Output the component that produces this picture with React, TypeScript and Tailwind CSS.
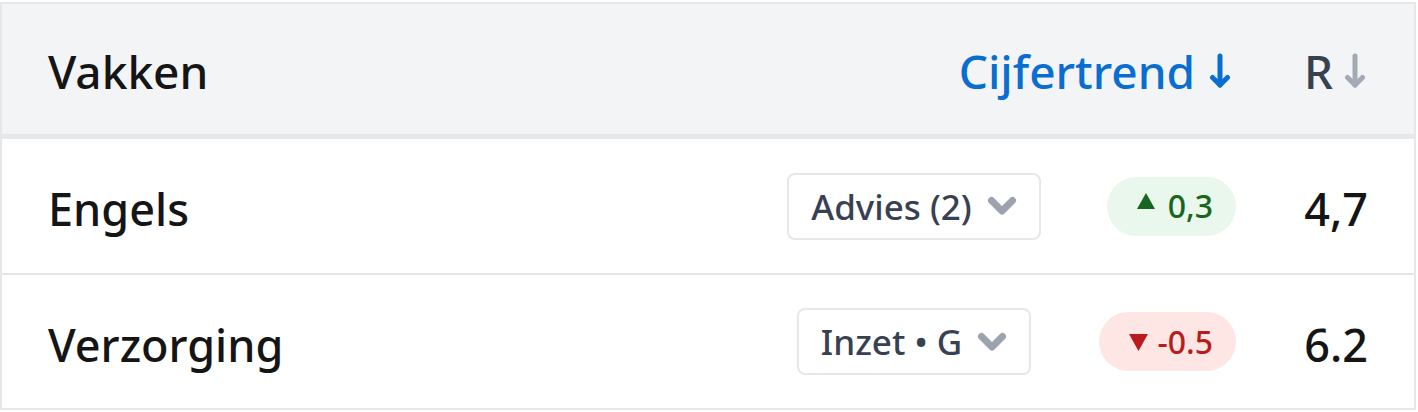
import React from "react";

const Chevron = () => (
  <svg width="30" height="20" viewBox="0 0 30 20" className="shrink-0">
    <path d="M4.5 4.5 L15 15 L25.5 4.5" fill="none" stroke="#9ca3af" strokeWidth="7" strokeLinecap="round" strokeLinejoin="round" />
  </svg>
);

const Arrow = ({ color }: { color: string }) => (
  <svg width="22" height="36" viewBox="0 0 22 36" className="shrink-0">
    <path d="M11 3 V32" fill="none" stroke={color} strokeWidth="5" strokeLinecap="round" />
    <path d="M3.5 24.5 L11 32 L18.5 24.5" fill="none" stroke={color} strokeWidth="5" strokeLinecap="round" strokeLinejoin="round" />
  </svg>
);

const Dropdown = ({ label }: { label: string }) => (
  <div className="flex h-[67px] items-center gap-[15px] rounded-[8px] border-2 border-[#e5e7eb] bg-white px-[22px] text-[35px] text-[#374151]">
    <span className="whitespace-nowrap leading-none">{label}</span>
    <Chevron />
  </div>
);

const Pill = ({ up, value }: { up: boolean; value: string }) => (
  <div
    className={
      up
        ? "flex h-[59px] items-center gap-[13px] rounded-full bg-[#e9f7ec] pl-[30px] pr-[23px] text-[32px] text-[#17651f]"
        : "flex h-[59px] items-center gap-[9px] rounded-full bg-[#fde6e3] pl-[30px] pr-[23px] text-[32px] text-[#b91c1c]"
    }
  >
    {up ? (
      <svg width="18" height="16" viewBox="0 0 18 16" className="mb-[10px]">
        <path d="M9 0 L18 16 H0 Z" fill="currentColor" />
      </svg>
    ) : (
      <svg width="19" height="17" viewBox="0 0 19 17" className="mt-[2px]">
        <path d="M0 0 H19 L9.5 17 Z" fill="currentColor" />
      </svg>
    )}
    <span className="leading-none">{value}</span>
  </div>
);

const rows = [
  { name: "Engels", dd: "Advies (2)", up: true, trend: "0,3", r: "4,7", h: "h-[136px]" },
  { name: "Verzorging", dd: "Inzet • G", up: false, trend: "-0.5", r: "6.2", h: "h-[135px]" },
];

export default function App() {
  return (
    <div className="h-[412px] w-[1418px] bg-white pt-[2px]" style={{ fontFamily: "'Noto Sans', 'Open Sans', sans-serif" }}>
      <div className="w-[1416px] border-x-2 border-t-2 border-[#e5e7eb]">
        <div className="grid h-[135px] grid-cols-[1fr_300px_172px_132px] items-center border-b-[5px] border-[#e5e7eb] bg-[#f3f4f6] pl-[46px] pr-[46px] pt-[4px] text-[46px] font-medium">
          <div className="text-[#151515]">Vakken</div>
          <div className="col-span-2 flex items-center justify-end gap-[14px] pr-[5px] text-[#0a6ed1]">
            <span>Cijfertrend</span>
            <Arrow color="#0a6ed1" />
          </div>
          <div className="flex items-center justify-end gap-[11px] pr-[2px] text-[#374151]">
            <span>R</span>
            <Arrow color="#a3aab5" />
          </div>
        </div>
        {rows.map((row) => (
          <div
            key={row.name}
            className={`grid ${row.h} grid-cols-[1fr_300px_172px_132px] items-center border-b-2 border-[#e5e7eb] pl-[46px] pr-[46px] text-[45px] font-medium text-[#151515]`}
          >
            <div className="pt-[6px]">{row.name}</div>
            <div className="flex justify-center">
              <Dropdown label={row.dd} />
            </div>
            <div className="flex justify-end">
              <Pill up={row.up} value={row.trend} />
            </div>
            <div className="pt-[6px] text-right">{row.r}</div>
          </div>
        ))}
      </div>
    </div>
  );
}
